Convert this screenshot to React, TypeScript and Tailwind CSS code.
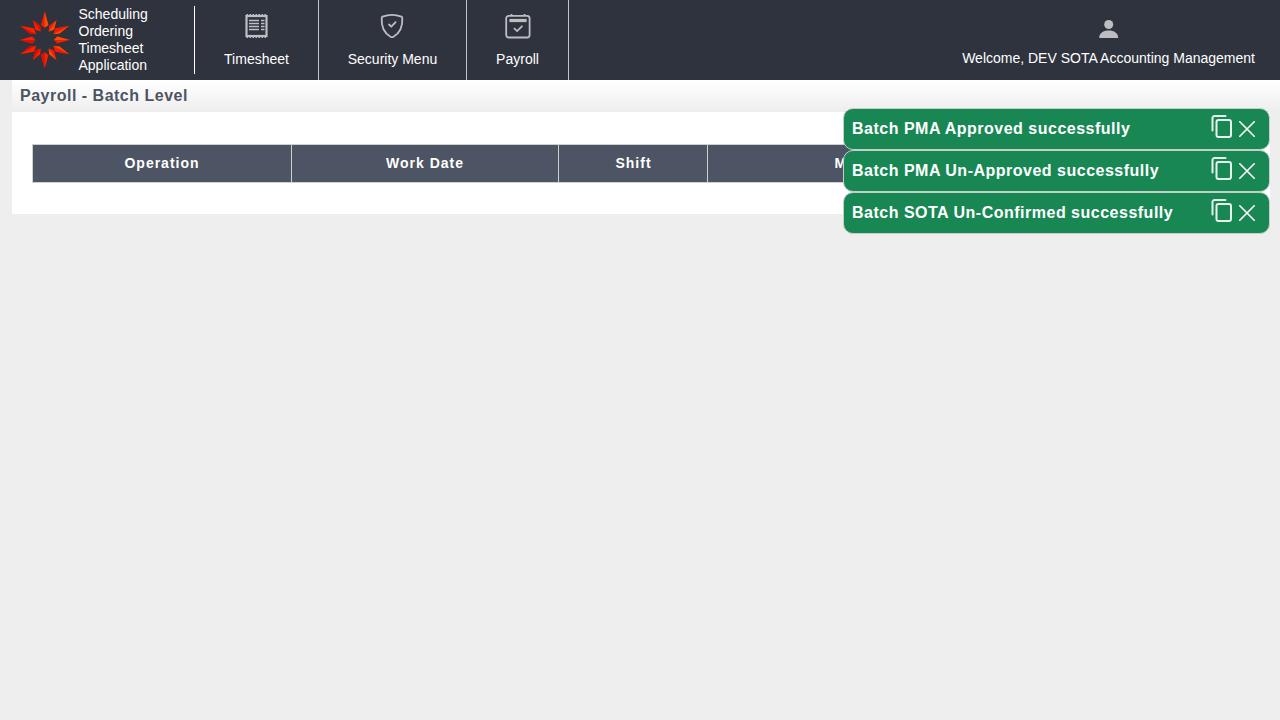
import type { ReactNode } from "react";

const LOGO_DARTS: { points: string; shade: string }[] = [
  { points: "24.7,-0.5 21,13 24.7,15.8 28.4,13", shade: "24.7,-0.5 24.7,15.8 28.4,13" },
  { points: "36.5,8 29.2,13.8 28.7,19.5 34,17.8", shade: "36.5,8 28.7,19.5 34,17.8" },
  { points: "49.3,13.7 35.3,16.2 33.3,22.2 39.5,21.6", shade: "49.3,13.7 33.3,22.2 39.5,21.6" },
  { points: "49.7,28 37.3,24.4 34,28 37.3,31.6", shade: "49.7,28 37.3,24.4 34,28" },
  { points: "49.3,42.3 39.5,34.4 33.3,33.8 35.3,39.8", shade: "49.3,42.3 39.5,34.4 33.3,33.8" },
  { points: "36.5,48 34,38.2 28.7,36.5 29.2,42.2", shade: "36.5,48 28.7,36.5 29.2,42.2" },
];

function Logo() {
  return (
    <svg viewBox="0 0 50 56" className="h-[56px] w-[50px] shrink-0 overflow-visible">
      {LOGO_DARTS.map((d) => (
        <g key={d.points}>
          <polygon points={d.points} fill="#fa1800" />
          <polygon points={d.shade} fill="#f05000" />
        </g>
      ))}
      <g transform="rotate(180 24.7 28)">
        {LOGO_DARTS.map((d) => (
          <g key={d.points}>
            <polygon points={d.points} fill="#fa2000" />
            <polygon points={d.shade} fill="#d81000" />
          </g>
        ))}
      </g>
    </svg>
  );
}

function TimesheetIcon() {
  return (
    <svg viewBox="0 0 24 26" className="h-[26px] w-6" fill="none" stroke="#bdbec2">
      <rect x="1.5" y="3" width="20" height="20" strokeWidth="2.2" />
      <path d="M1.5 1.7h20M1.5 24.3h20" strokeWidth="1.6" strokeDasharray="1.5 1.5" />
      <path d="M4 7.5h10M4 10.5h10M4 13.5h10M4 16.5h10M16 7.5h3.5M16 10.5h3.5M16 13.5h3.5M16 16.5h3.5" strokeWidth="1.6" />
    </svg>
  );
}

function ShieldIcon() {
  return (
    <svg viewBox="0 0 24 26" className="mr-px h-[26px] w-6" fill="none" stroke="#bdbec2" strokeLinecap="round" strokeLinejoin="round">
      <path d="M12 1.8C9.5 1.8 5 2.7 2.6 3.6 2 3.9 1.8 4.3 1.7 5 1.2 14 5 20.5 10.5 23.7c1.1.6 1.9.6 3 0C19 20.5 22.8 14 22.3 5c-.1-.7-.3-1.100-.9-1.400C19 2.700 14.500 1.800 12 1.800Z" strokeWidth="1.8" />
      <path d="m9 11.500 2.300 2.200 4.300-4.500" strokeWidth="1.8" />
    </svg>
  );
}

function PayrollIcon() {
  return (
    <svg viewBox="0 0 26 26" className="size-[26px]" fill="none" stroke="#bdbec2">
      <rect x="1.2" y="2.8" width="23.4" height="21.7" rx="2.5" strokeWidth="1.8" />
      <path d="M6.5 1v2M19.5 1v2" strokeWidth="1.8" />
      <path d="M6 7.5h14" strokeWidth="3.2" strokeLinecap="square" />
      <path d="m9.500 15.700 2.600 2.400 4.800-4.800" strokeWidth="1.8" strokeLinecap="round" />
    </svg>
  );
}

function CopyIcon() {
  return (
    <svg viewBox="0 0 22 24" className="h-6 w-[22px]" fill="none" stroke="#e6f2ec" strokeWidth="2" strokeLinecap="round">
      <path d="M1.5 15.5V3a2 2 0 0 1 2-2h11" />
      <rect x="5.5" y="5" width="14.5" height="17" rx="2" />
    </svg>
  );
}

function CloseIcon() {
  return (
    <svg viewBox="0 0 16 16" className="size-4" stroke="#ffffff" strokeWidth="1.6" strokeLinecap="round">
      <path d="m.8.8 14.4 14.4M15.2.8.8 15.2" />
    </svg>
  );
}

function MenuItem({ icon, label, width }: { icon: ReactNode; label: string; width: string }) {
  return (
    <div className={`flex h-20 flex-col items-center border-r border-[#c4c5c8] pt-[13px] ${width}`}>
      {icon}
      <span className="mt-[11px] leading-[18px]">{label}</span>
    </div>
  );
}

const TOASTS = [
  "Batch PMA Approved successfully",
  "Batch PMA Un-Approved successfully",
  "Batch SOTA Un-Confirmed successfully",
];

const COLUMNS = [
  { label: "Operation", width: "w-[259px]" },
  { label: "Work Date", width: "w-[267px]" },
  { label: "Shift", width: "w-[149px] pl-px" },
  { label: "Market", width: "w-[305px]" },
];

export default function App() {
  return (
    <div className="relative h-screen overflow-hidden bg-[#eeeeee] font-['Liberation_Sans',Arial,sans-serif]">
      <header className="flex h-20 bg-[#2f333e] text-sm text-white">
        <div className="flex w-[195px] items-center pl-5">
          <Logo />
          <div className="ml-[8.5px] w-[115.5px] leading-[17px]">
            Scheduling
            <br />
            Ordering
            <br />
            Timesheet
            <br />
            Application
          </div>
          <div className="h-[68px] w-px bg-white" />
        </div>
        <MenuItem icon={<TimesheetIcon />} label="Timesheet" width="w-[124px]" />
        <MenuItem icon={<ShieldIcon />} label="Security Menu" width="w-[148px]" />
        <MenuItem icon={<PayrollIcon />} label="Payroll" width="w-[102px]" />
        <div className="ml-auto mr-[25px] flex flex-col items-center pt-5">
          <svg viewBox="0 0 20 18" className="h-[18px] w-5" fill="#bdbec2">
            <circle cx="9.7" cy="4.5" r="4.5" />
            <path d="M.2 18c0-5 4-7.500 9.500-7.500s9.500 2.500 9.500 7.500Z" />
          </svg>
          <span className="mt-[11px] leading-[18px]">Welcome, DEV SOTA Accounting Management</span>
        </div>
      </header>

      <main className="ml-3">
        <h1 className="h-8 bg-linear-to-b from-white to-[#eeeeee] pl-2 text-base font-bold leading-[31px] tracking-[0.5px] text-[#4d5463]">
          Payroll - Batch Level
        </h1>
        <section className="mr-[10px] h-[102px] bg-white px-5 pt-8">
          <div className="flex h-[39px] overflow-hidden border border-[#d0d0d0] bg-[#4d5463] text-sm font-bold tracking-[1px] text-white">
            {COLUMNS.map((c) => (
              <div key={c.label} className={`shrink-0 border-r border-[#d0d0d0] text-center leading-[36px] ${c.width}`}>
                {c.label}
              </div>
            ))}
          </div>
        </section>
      </main>

      <div className="absolute right-[10px] top-[108px] w-[427px]">
        {TOASTS.map((message) => (
          <div key={message} className="flex h-[42px] items-center rounded-[10px] border border-[#c3d0ca] bg-[#198754] pl-2 pr-[14px] text-base font-bold tracking-[0.5px] text-white">
            <span className="mr-auto">{message}</span>
            <span className="mb-[5px]">
              <CopyIcon />
            </span>
            <span className="ml-[6px]">
              <CloseIcon />
            </span>
          </div>
        ))}
      </div>
    </div>
  );
}
